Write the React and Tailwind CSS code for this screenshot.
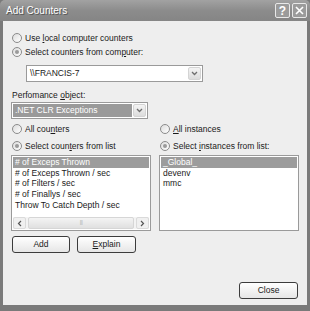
import React from "react";

const FONT = { fontFamily: '"Liberation Sans", Arial, sans-serif' };

// radio button, XP style in grey
function Radio({ checked, children }) {
  return (
    <div className="flex items-center h-[12px] gap-[3px] ml-[1px]">
      <div className="w-[10px] h-[10px] rounded-full border border-[#8b8b8b] bg-gradient-to-br from-[#dcdcdc] to-white flex items-center justify-center">
        {checked && <div className="w-[4px] h-[4px] rounded-full bg-[#9a9a9a]" />}
      </div>
      <span className="text-[8.5px] leading-none text-[#1a1a1a] whitespace-nowrap">{children}</span>
    </div>
  );
}

function U({ children }) {
  return <span className="underline underline-offset-[1px]">{children}</span>;
}

function Chevron() {
  return (
    <svg width="7" height="5" viewBox="0 0 7 5">
      <path d="M1 1 L3.5 3.5 L6 1" fill="none" stroke="#6e6e6e" strokeWidth="1.3" />
    </svg>
  );
}

function DropButton() {
  return (
    <div className="w-[13px] h-full border border-[#d4d4d4] rounded-[2px] bg-gradient-to-b from-[#f4f4f4] to-[#dcdcdc] flex items-center justify-center">
      <Chevron />
    </div>
  );
}

function XpButton({ className, children }) {
  return (
    <div
      className={`h-[17px] border border-[#3c3c3c] rounded-[3px] bg-gradient-to-b from-white to-[#e6e6e6] flex items-center justify-center text-[8.5px] text-[#1a1a1a] ${className}`}
    >
      <span>{children}</span>
    </div>
  );
}

const COUNTERS = [
  "# of Exceps Thrown",
  "# of Exceps Thrown / sec",
  "# of Filters / sec",
  "# of Finallys / sec",
  "Throw To Catch Depth / sec",
];

const INSTANCES = ["_Global_", "devenv", "mmc"];

function ListItem({ selected, children }) {
  return (
    <div
      className={`h-[10.7px] leading-[10.7px] text-[8.5px] px-[2px] whitespace-nowrap ${selected ? "bg-[#9c9c9c] text-white" : "text-[#1a1a1a]"}`}
    >
      {children}
    </div>
  );
}

export default function App() {
  return (
    <div className="w-[310px] h-[311px] flex flex-col bg-[#7a7a7a]" style={FONT}>
      {/* title bar */}
      <div className="h-[21px] flex items-center px-[6px] bg-gradient-to-b from-[#a2a2a2] via-[#8c8c8c] to-[#858585] rounded-t-[5px]">
        <span className="text-[10px] text-white flex-1" style={{ textShadow: "1px 1px 0 #555" }}>
          Add Counters
        </span>
        <div className="flex gap-[2px] -mr-[3px]">
          <div className="w-[15px] h-[15px] rounded-[2px] border border-[#e8e8e8] bg-[#9b9b9b] flex items-center justify-center text-white text-[12px] leading-none font-bold">
            ?
          </div>
          <div className="w-[15px] h-[15px] rounded-[2px] border border-[#e8e8e8] bg-[#9b9b9b] flex items-center justify-center">
            <svg width="9" height="9" viewBox="0 0 9 9">
              <path d="M1 1 L8 8 M8 1 L1 8" stroke="white" strokeWidth="1.6" />
            </svg>
          </div>
        </div>
      </div>

      {/* body */}
      <div className="flex-1 flex flex-col bg-[#eeeeee] border-l-[3px] border-r-[3px] border-b-[6px] border-[#7a7a7a] pl-[8px] pt-[11px]">
        <Radio>
          Use <U>l</U>ocal computer counters
        </Radio>
        <div className="mt-[2px]">
          <Radio checked>
            Select counters from com<U>p</U>uter:
          </Radio>
        </div>

        <div className="ml-[15px] mt-[7px] w-[177px] h-[17px] border border-[#9a9a9a] bg-white flex items-center p-[1px]">
          <span className="flex-1 text-[8.5px] pl-[2px] text-[#1a1a1a]">\\FRANCIS-7</span>
          <DropButton />
        </div>

        <div className="mt-[7px] h-[12px] flex items-center ml-[1px] text-[8.5px] text-[#1a1a1a]">
          <span>
            Perfomance <U>o</U>bject:
          </span>
        </div>

        <div className="mt-[1px] w-[137px] h-[17px] border border-[#9a9a9a] bg-white flex items-center p-[1px]">
          <div className="flex-1 h-full bg-[#9a9a9a] text-white text-[8.5px] flex items-center pl-[2px] mr-[1px]">
            .NET CLR Exceptions
          </div>
          <DropButton />
        </div>

        <div className="mt-[4px] grid grid-cols-[148px_148px]">
          <Radio>
            All cou<U>n</U>ters
          </Radio>
          <Radio>
            <U>A</U>ll instances
          </Radio>
        </div>
        <div className="mt-[5px] grid grid-cols-[148px_148px]">
          <Radio checked>
            Select coun<U>t</U>ers from list
          </Radio>
          <Radio checked>
            Select <U>i</U>nstances from list:
          </Radio>
        </div>

        <div className="mt-[3px] flex gap-[8px]">
          {/* counters list */}
          <div className="w-[140px] h-[76px] border border-[#9a9a9a] bg-white flex flex-col p-[1px]">
            <div className="flex-1 overflow-hidden">
              {COUNTERS.map((c, i) => (
                <ListItem key={c} selected={i === 0}>
                  {c}
                </ListItem>
              ))}
            </div>
            <div className="h-[12px] flex gap-[1px] bg-[#f3f3f3]">
              <div className="w-[13px] h-full border border-[#dadada] rounded-[2px] bg-[#f0f0f0] flex items-center justify-center">
                <svg width="5" height="7" viewBox="0 0 5 7">
                  <path d="M4 1 L1.5 3.5 L4 6" fill="none" stroke="#555" strokeWidth="1.2" />
                </svg>
              </div>
              <div className="flex-1 h-full border border-[#d6d6d6] rounded-[2px] bg-gradient-to-b from-[#f4f4f4] to-[#e0e0e0] flex items-center justify-center mx-[1px]">
                <span className="text-[5px] text-[#b0b0b0] tracking-[-0.5px]">|||</span>
              </div>
              <div className="w-[13px] h-full border border-[#dadada] rounded-[2px] bg-[#f0f0f0] flex items-center justify-center">
                <svg width="5" height="7" viewBox="0 0 5 7">
                  <path d="M1 1 L3.5 3.5 L1 6" fill="none" stroke="#555" strokeWidth="1.2" />
                </svg>
              </div>
            </div>
          </div>

          {/* instances list */}
          <div className="w-[140px] h-[76px] border border-[#9a9a9a] bg-white p-[1px]">
            {INSTANCES.map((c, i) => (
              <ListItem key={c} selected={i === 0}>
                {c}
              </ListItem>
            ))}
          </div>
        </div>

        <div className="mt-[5px] flex gap-[7px] ml-[1px]">
          <XpButton className="w-[58px]">Add</XpButton>
          <XpButton className="w-[59px]">
            <U>E</U>xplain
          </XpButton>
        </div>

        <div className="flex-1" />
        <div className="flex justify-end pr-[9px] pb-[6px]">
          <XpButton className="w-[59px] h-[16px]">Close</XpButton>
        </div>
      </div>
    </div>
  );
}
